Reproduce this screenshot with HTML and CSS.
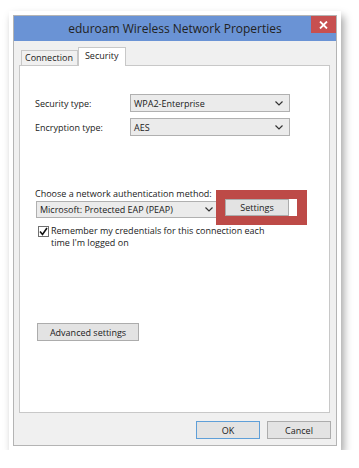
FILE: index.html
```html
<!DOCTYPE html>
<html lang="en">
<head>
    <meta charset="UTF-8">
    <title>eduroam Wireless Network Properties</title>
    <link rel="stylesheet" href="styles.css">
</head>
<body>
    <div class="card">
        <div class="window">
            <div class="titlebar">
                <span class="title">eduroam Wireless Network Properties</span>
                <span class="close">
                    <svg width="9" height="8" viewBox="0 0 9 8"><path d="M1 0.5 L8 7.5 M8 0.5 L1 7.5" stroke="#fff" stroke-width="1.8"/></svg>
                </span>
            </div>
            <div class="body">
                <div class="tabs">
                    <div class="tab">Connection</div>
                    <div class="tab active">Security</div>
                </div>
                <div class="panel">
                    <div class="row first">
                        <label>Security type:</label>
                        <div class="combo wide">WPA2-Enterprise<svg class="chev" width="8" height="5" viewBox="0 0 8 5"><path d="M0.5 0.5 L4 4 L7.5 0.5" fill="none" stroke="#333" stroke-width="1.2"/></svg></div>
                    </div>
                    <div class="row">
                        <label>Encryption type:</label>
                        <div class="combo wide">AES<svg class="chev" width="8" height="5" viewBox="0 0 8 5"><path d="M0.5 0.5 L4 4 L7.5 0.5" fill="none" stroke="#333" stroke-width="1.2"/></svg></div>
                    </div>

                    <div class="method-label">Choose a network authentication method:</div>
                    <div class="method-row">
                        <div class="combo method">Microsoft: Protected EAP (PEAP)<svg class="chev" width="8" height="5" viewBox="0 0 8 5"><path d="M0.5 0.5 L4 4 L7.5 0.5" fill="none" stroke="#333" stroke-width="1.2"/></svg></div>
                        <div class="highlight">
                            <button class="btn settings">Settings</button>
                        </div>
                    </div>
                    <div class="check-row">
                        <span class="checkbox">
                            <svg width="9" height="9" viewBox="0 0 9 9"><path d="M1 4.5 L3.5 7.5 L8 1" fill="none" stroke="#111" stroke-width="1.6"/></svg>
                        </span>
                        <span class="check-text">Remember my credentials for this connection each<br>time I'm logged on</span>
                    </div>

                    <button class="btn advanced">Advanced settings</button>
                </div>
                <div class="footer">
                    <button class="btn ok">OK</button>
                    <button class="btn">Cancel</button>
                </div>
            </div>
        </div>
    </div>
</body>
</html>
```

FILE: styles.css
```css
body {
    margin: 0;
    padding: 11px 0 0 9px;
    background-color: #fff;
    font-family: "Open Sans", "Noto Sans", sans-serif;
    font-size: 9px;
    color: #1a1a1a;
}
.card {
    width: 324px;
    padding: 4px;
    background-color: #fff;
    box-shadow: 3px 5px 8px rgba(0, 0, 0, 0.35);
}
.window {
    display: flex;
    flex-direction: column;
    height: 429px;
    border: 1px solid #b4b4b4;
    background-color: #f0f0f0;
}
.titlebar {
    display: flex;
    position: relative;
    justify-content: center;
    height: 25px;
    background-color: #6a93d5;
}
.title {
    font-size: 12px;
    color: #222;
    line-height: 26px;
}
.close {
    position: absolute;
    top: 0;
    right: 0;
    display: flex;
    align-items: center;
    justify-content: center;
    width: 25px;
    height: 17px;
    background-color: #c75050;
}
.body {
    display: flex;
    flex-direction: column;
    flex: 1;
    padding: 6px 6px 7px 5px;
}
.tabs {
    display: flex;
    align-items: flex-end;
    height: 18px;
    padding-left: 2px;
}
.tab {
    height: 14px;
    padding: 0 4px 0 3px;
    line-height: 14px;
    border: 1px solid #c8c8c8;
    border-bottom: none;
    background-color: #f0f0f0;
}
.tab.active {
    height: 18px;
    line-height: 15px;
    margin-bottom: -1px;
    padding: 0 7px 0 6px;
    background-color: #fff;
    position: relative;
}
.panel {
    display: flex;
    flex-direction: column;
    height: 346px;
    padding: 0 0 0 15px;
    background-color: #fff;
    border: 1px solid #c8c8c8;
}
.row {
    display: flex;
    align-items: center;
    margin-top: 6px;
}
.row.first {
    margin-top: 28px;
}
.row label {
    width: 95px;
}
.combo {
    display: flex;
    align-items: center;
    justify-content: space-between;
    box-sizing: border-box;
    height: 18px;
    padding: 0 6px 0 3px;
    border: 1px solid #b0b0b0;
    background-color: #ebebeb;
}
.combo.wide {
    width: 160px;
}
.chev {
    flex-shrink: 0;
}
.method-label {
    margin-top: 51px;
}
.method-row {
    display: flex;
    align-items: center;
    margin-top: 1px;
    margin-left: 1px;
}
.combo.method {
    width: 184px;
    height: 17px;
}
.highlight {
    position: relative;
    z-index: 1;
    margin: -11px 0 -7px -4px;
    width: 72px;
    height: 17px;
    border: 9px solid #bd4a47;
    border-right-width: 10px;
    background-color: #fff;
}
.btn {
    box-sizing: border-box;
    height: 18px;
    padding: 0;
    font-family: inherit;
    font-size: 9px;
    color: #1a1a1a;
    border: 1px solid #acacac;
    background-color: #e3e3e3;
}
.settings {
    width: 64px;
    height: 17px;
}
.check-row {
    display: flex;
    align-items: flex-start;
    margin-top: 7px;
    margin-left: 3px;
}
.check-text {
    line-height: 12px;
}
.checkbox {
    display: flex;
    align-items: center;
    justify-content: center;
    box-sizing: border-box;
    width: 11px;
    height: 11px;
    margin: 1px 2px 0 0;
    border: 1px solid #707070;
    background-color: #fff;
}
.advanced {
    width: 102px;
    margin-top: 74px;
    margin-left: 2px;
}
.footer {
    display: flex;
    justify-content: flex-end;
    gap: 7px;
    margin-top: 8px;
    margin-right: -1px;
}
.footer .btn {
    width: 64px;
}
.btn.ok {
    border-color: #5f9fd8;
}
```
